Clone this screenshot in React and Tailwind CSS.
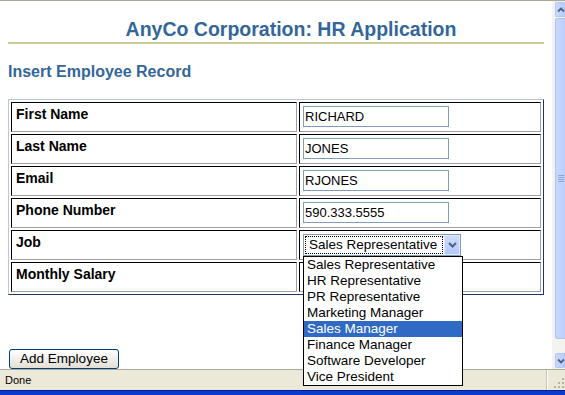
const jobs = [
    "Sales Representative",
    "HR Representative",
    "PR Representative",
    "Marketing Manager",
    "Sales Manager",
    "Finance Manager",
    "Software Developer",
    "Vice President",
];

const rows = [
    { label: "First Name", value: "RICHARD" },
    { label: "Last Name", value: "JONES" },
    { label: "Email", value: "RJONES" },
    { label: "Phone Number", value: "590.333.5555" },
    { label: "Job", select: true },
    { label: "Monthly Salary", value: "" },
];

const cell = "h-[30px] border border-t-black border-l-black border-r-[#a0a0a0] border-b-[#a0a0a0]";

const ScrollArrow = ({ down }) => (
    <div className="h-[15px] rounded-l-[2px] border border-r-0 border-[#b4c8f6] bg-linear-to-r from-[#c9d9fd] to-[#b7cbf9] flex items-center justify-center">
        <svg width="8" height="6" viewBox="0 0 8 6">
            <polyline
                points={down ? "1,1.5 4,4.5 7,1.5" : "1,4.5 4,1.5 7,4.5"}
                fill="none"
                stroke="#4d6185"
                strokeWidth="1.8"
            />
        </svg>
    </div>
);

const JobSelect = () => (
    <div className="relative mt-[3px] ml-[3px] w-[158px] h-[22px] border border-[#7f9db9] bg-white flex">
        <div className="flex-1 m-[1px] border border-dotted border-black flex items-center pl-[3px] text-[13.5px] leading-none">
            Sales Representative
        </div>
        <div className="w-[16px] rounded-[1px] border border-[#e3ebfe] bg-linear-to-b from-[#cfdcfd] to-[#b3c8f8] flex items-center justify-center">
            <svg width="9" height="6" viewBox="0 0 9 6">
                <polyline points="1,1 4.5,4.5 8,1" fill="none" stroke="#4d6185" strokeWidth="2" />
            </svg>
        </div>

        {/* list opened under the select */}
        <div className="absolute z-10 left-[-1px] top-[21px] w-[160px] border border-black bg-white">
            {jobs.map((job) => (
                <div
                    key={job}
                    className={
                        job === "Sales Manager"
                            ? "h-[16px] leading-[16px] pl-[3px] text-[13.5px] bg-[#316ac5] text-white"
                            : "h-[16px] leading-[16px] pl-[3px] text-[13.5px] text-black"
                    }
                >
                    {job}
                </div>
            ))}
        </div>
    </div>
);

const App = () => {
    return (
        <div className="w-[565px] h-[395px] overflow-hidden bg-white flex flex-col font-['Liberation_Sans',Arial,sans-serif] text-black">
            <div className="h-px bg-[#aca899]" />

            <div className="flex h-[368px]">
                {/* page */}
                <div className="w-[552px] px-[8px]">
                    <div className="mt-[17px] pl-[30px] text-center text-[19.5px] leading-[23px] font-bold text-[#336699]">
                        AnyCo Corporation: HR Application
                    </div>
                    <div className="mt-[1px] h-[2px] bg-[#cccc99]" />

                    <div className="mt-[19px] text-[16px] leading-[18px] font-bold text-[#336699]">
                        Insert Employee Record
                    </div>

                    {/* form table */}
                    <div className="mt-[18px] border border-t-[#b9c6d8] border-l-[#b9c6d8] border-r-[#1b3a66] border-b-[#1b3a66] p-[2px] flex flex-col gap-[2px]">
                        {rows.map((row) => (
                            <div key={row.label} className="grid grid-cols-[286px_242px] gap-[2px]">
                                <div className={`${cell} pl-[4px] pt-[4px] text-[14px] leading-[15px] font-bold`}>
                                    {row.label}
                                </div>
                                <div className={cell}>
                                    {row.select ? (
                                        <JobSelect />
                                    ) : (
                                        <input
                                            type="text"
                                            defaultValue={row.value}
                                            className="block mt-[3px] ml-[3px] w-[146px] h-[21px] border border-[#7f9db9] pl-[1px] text-[13px] outline-none"
                                        />
                                    )}
                                </div>
                            </div>
                        ))}
                    </div>

                    <button className="block mt-[54px] ml-[1px] w-[110px] h-[20px] border border-[#003c74] rounded-[3px] bg-linear-to-b from-white to-[#e2dfd5] text-[13.5px] leading-none">
                        Add Employee
                    </button>
                </div>

                {/* scrollbar */}
                <div className="w-[13px] bg-[#f4f3ee] pl-[3px] py-[1px] flex flex-col gap-[1px]">
                    <ScrollArrow />
                    <div className="h-[321px] rounded-l-[3px] border border-r-0 border-[#aec3f3] bg-linear-to-r from-[#c9d9fd] to-[#bccffa] flex items-center justify-center">
                        <div className="w-[6px] flex flex-col gap-[1px]">
                            <div className="h-px bg-[#8ea8e6]" />
                            <div className="h-px bg-[#8ea8e6]" />
                            <div className="h-px bg-[#8ea8e6]" />
                            <div className="h-px bg-[#8ea8e6]" />
                        </div>
                    </div>
                    <div className="flex-1" />
                    <ScrollArrow down />
                </div>
            </div>

            {/* status bar */}
            <div className="h-[21px] border-t border-[#aca899] bg-[#ece9d8] flex">
                <div className="w-[547px] pl-[5px] flex items-center text-[11px] border-r border-[#cac6b5]">Done</div>
                <div className="w-px bg-white" />
                <div className="flex-1 flex items-end justify-end pb-[1px]">
                    <svg width="12" height="12" viewBox="0 0 12 12">
                        <rect x="9" y="1" width="2" height="2" fill="#b7b3a6" />
                        <rect x="5" y="5" width="2" height="2" fill="#b7b3a6" />
                        <rect x="9" y="5" width="2" height="2" fill="#b7b3a6" />
                        <rect x="1" y="9" width="2" height="2" fill="#b7b3a6" />
                        <rect x="5" y="9" width="2" height="2" fill="#b7b3a6" />
                        <rect x="9" y="9" width="2" height="2" fill="#b7b3a6" />
                    </svg>
                </div>
            </div>

            <div className="h-[5px] border-t border-[#0a1f8c] bg-[#0b3ad0]" />
        </div>
    );
};

export default App;
